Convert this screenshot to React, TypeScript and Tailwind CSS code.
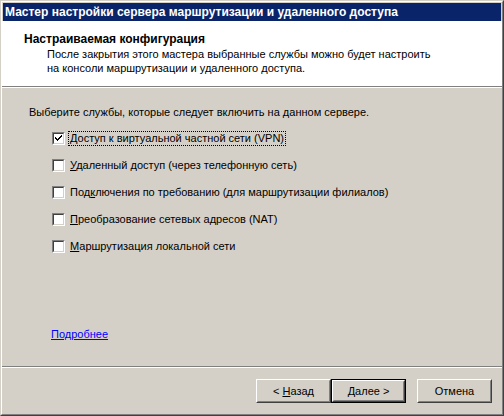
import type { ReactNode } from 'react'

const font = { fontFamily: '"Liberation Sans", Arial, sans-serif' }

type Service = { before: string; key: string; after: string; checked: boolean }

const services: Service[] = [
  { before: '', key: '', after: 'Доступ к виртуальной частной сети (VPN)', checked: true },
  { before: '', key: 'У', after: 'даленный доступ (через телефонную сеть)', checked: false },
  { before: 'Под', key: 'к', after: 'лючения по требованию (для маршрутизации филиалов)', checked: false },
  { before: '', key: 'П', after: 'реобразование сетевых адресов (NAT)', checked: false },
  { before: '', key: 'М', after: 'аршрутизация локальной сети', checked: false },
]

function Checkbox({ checked }: { checked: boolean }) {
  return (
    <div className="w-[13px] h-[13px] shrink-0 border border-t-[#808080] border-l-[#808080] border-b-white border-r-white">
      <div className="w-full h-full border border-t-[#404040] border-l-[#404040] border-b-[#d4d0c8] border-r-[#d4d0c8] bg-white">
        {checked && (
          <svg width="9" height="9" viewBox="0 0 9 9" className="block">
            <path d="M1 3h1v1h1v1h1V4h1V3h1V2h1V1h1v2H7v1H6v1H5v1H4v1H3V6H2V5H1z" fill="#000" shapeRendering="crispEdges" />
          </svg>
        )}
      </div>
    </div>
  )
}

function Button({ children, isDefault }: { children: ReactNode; isDefault?: boolean }) {
  const inner = (
    <div className="h-full border border-t-white border-l-white border-b-[#404040] border-r-[#404040]">
      <div className="h-full border border-t-[#d4d0c8] border-l-[#d4d0c8] border-b-[#808080] border-r-[#808080] flex items-center justify-center text-[11px] text-black">
        {children}
      </div>
    </div>
  )
  if (isDefault) {
    return <div className="w-[75px] h-[24px] border border-black">{inner}</div>
  }
  return <div className="w-[75px] h-[24px]">{inner}</div>
}

export default function App() {
  return (
    <div
      className="w-[504px] h-[416px] bg-[#d4d0c8] border border-t-[#d4d0c8] border-l-[#d4d0c8] border-b-[#404040] border-r-[#404040]"
      style={font}
    >
      <div className="h-full border border-t-white border-l-white border-b-[#808080] border-r-[#808080] p-px flex flex-col">
        {/* title bar */}
        <div className="h-[18px] bg-[#0a246a] flex items-center pl-[2px] text-white font-bold text-[12px] leading-none">
          Мастер настройки сервера маршрутизации и удаленного доступа
        </div>

        {/* header */}
        <div className="h-[65px] bg-white pt-[11px] -mx-px">
          <div className="pl-[22px] font-bold text-[12px] leading-[14px] text-black">Настраиваемая конфигурация</div>
          <div className="pl-[45px] mt-px text-[11px] leading-[14px] text-black">
            После закрытия этого мастера выбранные службы можно будет настроить
            <br />
            на консоли маршрутизации и удаленного доступа.
          </div>
        </div>
        <div className="h-px bg-[#808080] -mx-px" />
        <div className="h-px bg-white -mx-px" />

        {/* body */}
        <div className="flex-1 pt-[17px] pl-[26px] text-[11px] text-black">
          <div className="leading-[14px]">Выберите службы, которые следует включить на данном сервере.</div>
          <div className="mt-[6px] pl-[23px] flex flex-col">
            {services.map((s, i) => (
              <div key={i} className="h-[27px] flex items-center">
                <Checkbox checked={s.checked} />
                <span
                  className={
                    'ml-[3px] leading-[13px] px-px border border-dotted ' +
                    (i === 0 ? 'border-black' : 'border-transparent')
                  }
                >
                  {s.before}
                  {s.key && <span className="underline">{s.key}</span>}
                  {s.after}
                </span>
              </div>
            ))}
          </div>
          <div className="mt-[67px] pl-[22px] leading-[14px]">
            <span className="text-[#0000ff] underline">Подробнее </span>
          </div>
        </div>

        <div className="h-px bg-[#808080] -mx-px" />
        <div className="h-px bg-white -mx-px" />

        {/* buttons */}
        <div className="h-[45px] flex items-start justify-end pt-[11px] pr-[9px]">
          <Button>
            &lt; <span className="underline ml-[3px]">Н</span>азад
          </Button>
          <Button isDefault>
            <span className="underline">Д</span>алее &gt;
          </Button>
          <div className="w-[11px]" />
          <Button>Отмена</Button>
        </div>
      </div>
    </div>
  )
}
